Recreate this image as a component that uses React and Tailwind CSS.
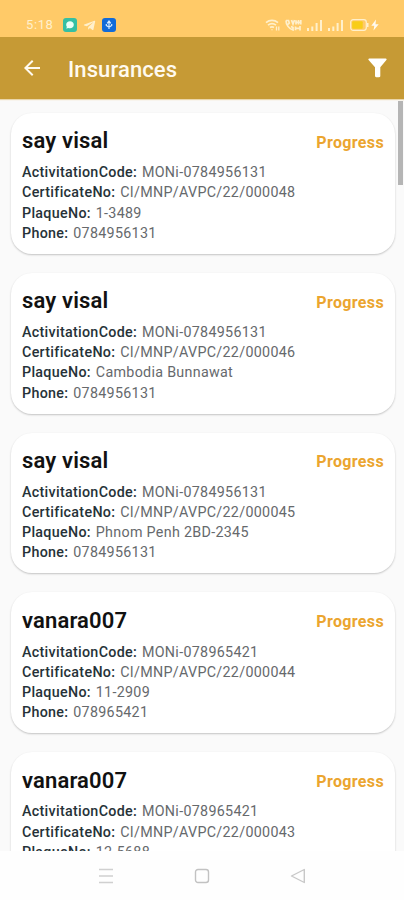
import { MdArrowBack } from 'react-icons/md';
import { FaTelegramPlane } from 'react-icons/fa';

const insurances = [
  { name: 'say visal', code: 'MONi-0784956131', certificate: 'CI/MNP/AVPC/22/000048', plaque: '1-3489', phone: '0784956131' },
  { name: 'say visal', code: 'MONi-0784956131', certificate: 'CI/MNP/AVPC/22/000046', plaque: 'Cambodia Bunnawat', phone: '0784956131' },
  { name: 'say visal', code: 'MONi-0784956131', certificate: 'CI/MNP/AVPC/22/000045', plaque: 'Phnom Penh 2BD-2345', phone: '0784956131' },
  { name: 'vanara007', code: 'MONi-078965421', certificate: 'CI/MNP/AVPC/22/000044', plaque: '11-2909', phone: '078965421' },
  { name: 'vanara007', code: 'MONi-078965421', certificate: 'CI/MNP/AVPC/22/000043', plaque: '12-5688', phone: '078965421' },
];

function Signal() {
  return (
    <svg width="16" height="12" viewBox="0 0 16 12" fill="currentColor">
      <path d="M0 9h2v3H0zM4.3 7.5h2V12h-2zM8.6 4h2v8h-2zM13 1h2v11h-2z" />
    </svg>
  );
}

function StatusBar() {
  return (
    <div className="h-[37px] shrink-0 bg-[#ffca68] text-[#fff0cc] flex items-end justify-between pl-[26px] pr-[25px] pb-[4px]">
      <div className="flex items-center h-4">
        <span className="w-[37px] text-[13px] leading-4 tracking-[0.6px]">5:18</span>
        <svg width="14" height="14" viewBox="0 0 14 14">
          <rect width="14" height="14" rx="3" fill="#35bfa3" />
          <path d="M7 3.2c2.2 0 3.8 1.5 3.8 3.5s-1.6 3.6-3.8 3.6c-.7 0-1.3-.1-1.9-.4l-1.7.9.4-2A3.4 3.4 0 0 1 3.2 6.7c0-2 1.6-3.5 3.8-3.5z" fill="#eafff6" />
        </svg>
        <FaTelegramPlane className="ml-[6px] text-[13px]" />
        <svg className="ml-[6px]" width="14" height="14" viewBox="0 0 14 14">
          <rect width="14" height="14" rx="3" fill="#116bd8" />
          <path d="M7 11V4M5.2 5.3L7 3l1.8 2.3M4.3 6v1.5L7 9.3l2.7-1.8V6" fill="none" stroke="#d5ebff" strokeWidth="1.2" />
        </svg>
      </div>
      <div className="flex items-center h-4">
        <svg width="16" height="12" viewBox="0 0 16 12" fill="none" stroke="currentColor" strokeWidth="1.7">
          <path d="M1 3.6a9.5 9.5 0 0 1 12 0M3 6.1a6.5 6.5 0 0 1 8 0M5 8.5a3.5 3.5 0 0 1 4 0" />
          <path d="M7 10.3v1M11.5 7.5v4M13.8 7.5v4" strokeWidth="1.3" />
        </svg>
        <svg className="ml-[4px]" width="17" height="12" viewBox="0 0 17 12" fill="none" stroke="currentColor" strokeWidth="1.7">
          <path d="M1 1.5c0 4 3 8.5 7 9.5V8.500L6 7.500M1 1.500h2.500l.8 2.500-1.300 1.500M6.500 1l1.500 4 1.500-4M11 5.500V1.200M13.500 1v4.500M15.800 1v4.500M11 3.300h5M10.500 7.500v3.700M10.500 9.300h4M15 7v4.500" />
        </svg>
        <span className="ml-[5px]"><Signal /></span>
        <span className="ml-[5px]"><Signal /></span>
        <svg className="ml-[6px]" width="19" height="12" viewBox="0 0 19 12">
          <rect x=".7" y=".7" width="15.6" height="10.6" rx="2.5" fill="none" stroke="currentColor" strokeWidth="1.2" />
          <rect x="2.2" y="2.2" width="10.5" height="7.6" rx="1" fill="#f8cd18" />
          <path d="M17 4h1.5v4H17z" fill="currentColor" />
        </svg>
        <svg className="ml-[2px]" width="8" height="12" viewBox="0 0 8 12" fill="#fffaf0">
          <path d="M5 .5L.3 6.800h3L2.500 11.500 7.700 5.200H4.500z" />
        </svg>
      </div>
    </div>
  );
}

function Header() {
  return (
    <header className="h-[62px] shrink-0 bg-[#c69a35] text-[#fffaf0] flex items-center pl-[20px] pr-[17px] relative z-10 shadow-[0_1px_1px_#ead6aa]">
      <MdArrowBack className="text-[24px]" />
      <h1 className="ml-[24px] mt-[3px] grow text-[22px] leading-7 font-medium tracking-[0.1px]">Insurances</h1>
      <svg width="19" height="20" viewBox="0 0 19 20" fill="#fff">
        <path d="M1.3.5h16.400c.9 0 1.200.9.700 1.500L12.300 9.200v8.900c0 .8-.6 1.200-1.200 1.200H8.200c-.6 0-1.200-.4-1.200-1.200V9.200L.6 2C.1 1.400.4.5 1.300.5z" />
      </svg>
    </header>
  );
}

function Row({ label, value }) {
  return (
    <p className="text-[14.3px] leading-[20.2px] tracking-[0.3px] text-[#66696c] whitespace-nowrap">
      <span className="mr-[1px] font-medium text-[#263238]">{label}:</span> {value}
    </p>
  );
}

function InsuranceCard({ item }) {
  return (
    <div className="h-[140.8px] shrink-0 rounded-[21px] bg-white px-[11px] pt-[13.4px] shadow-[0_1px_2px_rgba(0,0,0,0.22)]">
      <div className="flex items-center justify-between mb-[6.8px]">
        <h2 className="text-[22px] leading-[29px] font-semibold tracking-[0.15px] text-[#111]">{item.name}</h2>
        <span className="mt-[4px] text-[16px] leading-5 font-bold tracking-[0.35px] text-[#eba52f]">Progress</span>
      </div>
      <Row label="ActivitationCode" value={item.code} />
      <Row label="CertificateNo" value={item.certificate} />
      <Row label="PlaqueNo" value={item.plaque} />
      <Row label="Phone" value={item.phone} />
    </div>
  );
}

function NavBar() {
  return (
    <nav className="h-[49px] shrink-0 bg-[#fefefe] flex items-center justify-between px-[98px]">
      <svg width="16" height="16" viewBox="0 0 16 16" stroke="#d0d0d0" strokeWidth="1.7">
        <path d="M1 1.500h14M1 8h14M1 14.500h14" />
      </svg>
      <svg width="16" height="16" viewBox="0 0 16 16" fill="none" stroke="#c2c2c2" strokeWidth="1.4">
        <rect x="1.5" y="1.5" width="13" height="13" rx="2.5" />
      </svg>
      <svg width="16" height="16" viewBox="0 0 16 16" fill="none" stroke="#c8c8c8" strokeWidth="1.4" strokeLinejoin="round">
        <path d="M14.3 1.500v13L1.500 8z" />
      </svg>
    </nav>
  );
}

export default function App() {
  return (
    <div className="w-full h-screen flex flex-col overflow-hidden bg-[#fafafa] font-['Roboto',sans-serif]">
      <StatusBar />
      <Header />
      <main className="relative grow min-h-0 overflow-hidden pl-[11px] pr-[9px] pt-[14px] flex flex-col gap-[19px]">
        {insurances.map((item, i) => (
          <InsuranceCard key={i} item={item} />
        ))}
        <div className="absolute right-[1px] top-[2px] w-[5px] h-[84px] bg-[#b5b5b5]" />
      </main>
      <NavBar />
    </div>
  );
}
